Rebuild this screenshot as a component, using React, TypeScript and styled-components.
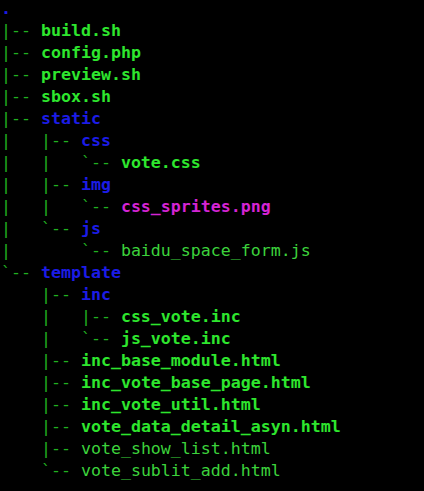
import React from "react";
import styled, { createGlobalStyle } from "styled-components";

const Global = createGlobalStyle`
  html, body { margin: 0; padding: 0; background: #000; }
  body { width: 424px; height: 491px; overflow: hidden; }
`;

const Terminal = styled.pre`
  margin: -2px 0 0 0;
  padding: 0 0 0 1px;
  background: #000;
  font-family: "DejaVu Sans Mono", "Liberation Mono", monospace;
  font-size: 16.6px;
  line-height: 22px;
  white-space: pre;
`;

const Row = styled.div`
  display: block;
  height: 22px;
`;

const Branch = styled.span`
  color: #20b020;
`;

type Kind = "dir" | "exec" | "file" | "image";

const colors: Record<Kind, string> = {
  dir: "#1c1ce6",
  exec: "#2ee62e",
  file: "#3cd23c",
  image: "#d424d4",
};

const Name = styled.span<{ $kind: Kind }>`
  color: ${(p) => colors[p.$kind]};
  font-weight: ${(p) => (p.$kind === "file" ? 400 : 700)};
`;

const lines: [string, string, Kind][] = [
  ["", ".", "dir"],
  ["|-- ", "build.sh", "exec"],
  ["|-- ", "config.php", "exec"],
  ["|-- ", "preview.sh", "exec"],
  ["|-- ", "sbox.sh", "exec"],
  ["|-- ", "static", "dir"],
  ["|   |-- ", "css", "dir"],
  ["|   |   `-- ", "vote.css", "exec"],
  ["|   |-- ", "img", "dir"],
  ["|   |   `-- ", "css_sprites.png", "image"],
  ["|   `-- ", "js", "dir"],
  ["|       `-- ", "baidu_space_form.js", "file"],
  ["`-- ", "template", "dir"],
  ["    |-- ", "inc", "dir"],
  ["    |   |-- ", "css_vote.inc", "exec"],
  ["    |   `-- ", "js_vote.inc", "exec"],
  ["    |-- ", "inc_base_module.html", "exec"],
  ["    |-- ", "inc_vote_base_page.html", "exec"],
  ["    |-- ", "inc_vote_util.html", "exec"],
  ["    |-- ", "vote_data_detail_asyn.html", "exec"],
  ["    |-- ", "vote_show_list.html", "file"],
  ["    `-- ", "vote_sublit_add.html", "file"],
];

export default function App() {
  return (
    <>
      <Global />
      <Terminal>
        {lines.map(([prefix, name, kind], i) => (
          <Row key={i}>
            <Branch>{prefix}</Branch>
            <Name $kind={kind}>{name}</Name>
          </Row>
        ))}
      </Terminal>
    </>
  );
}
